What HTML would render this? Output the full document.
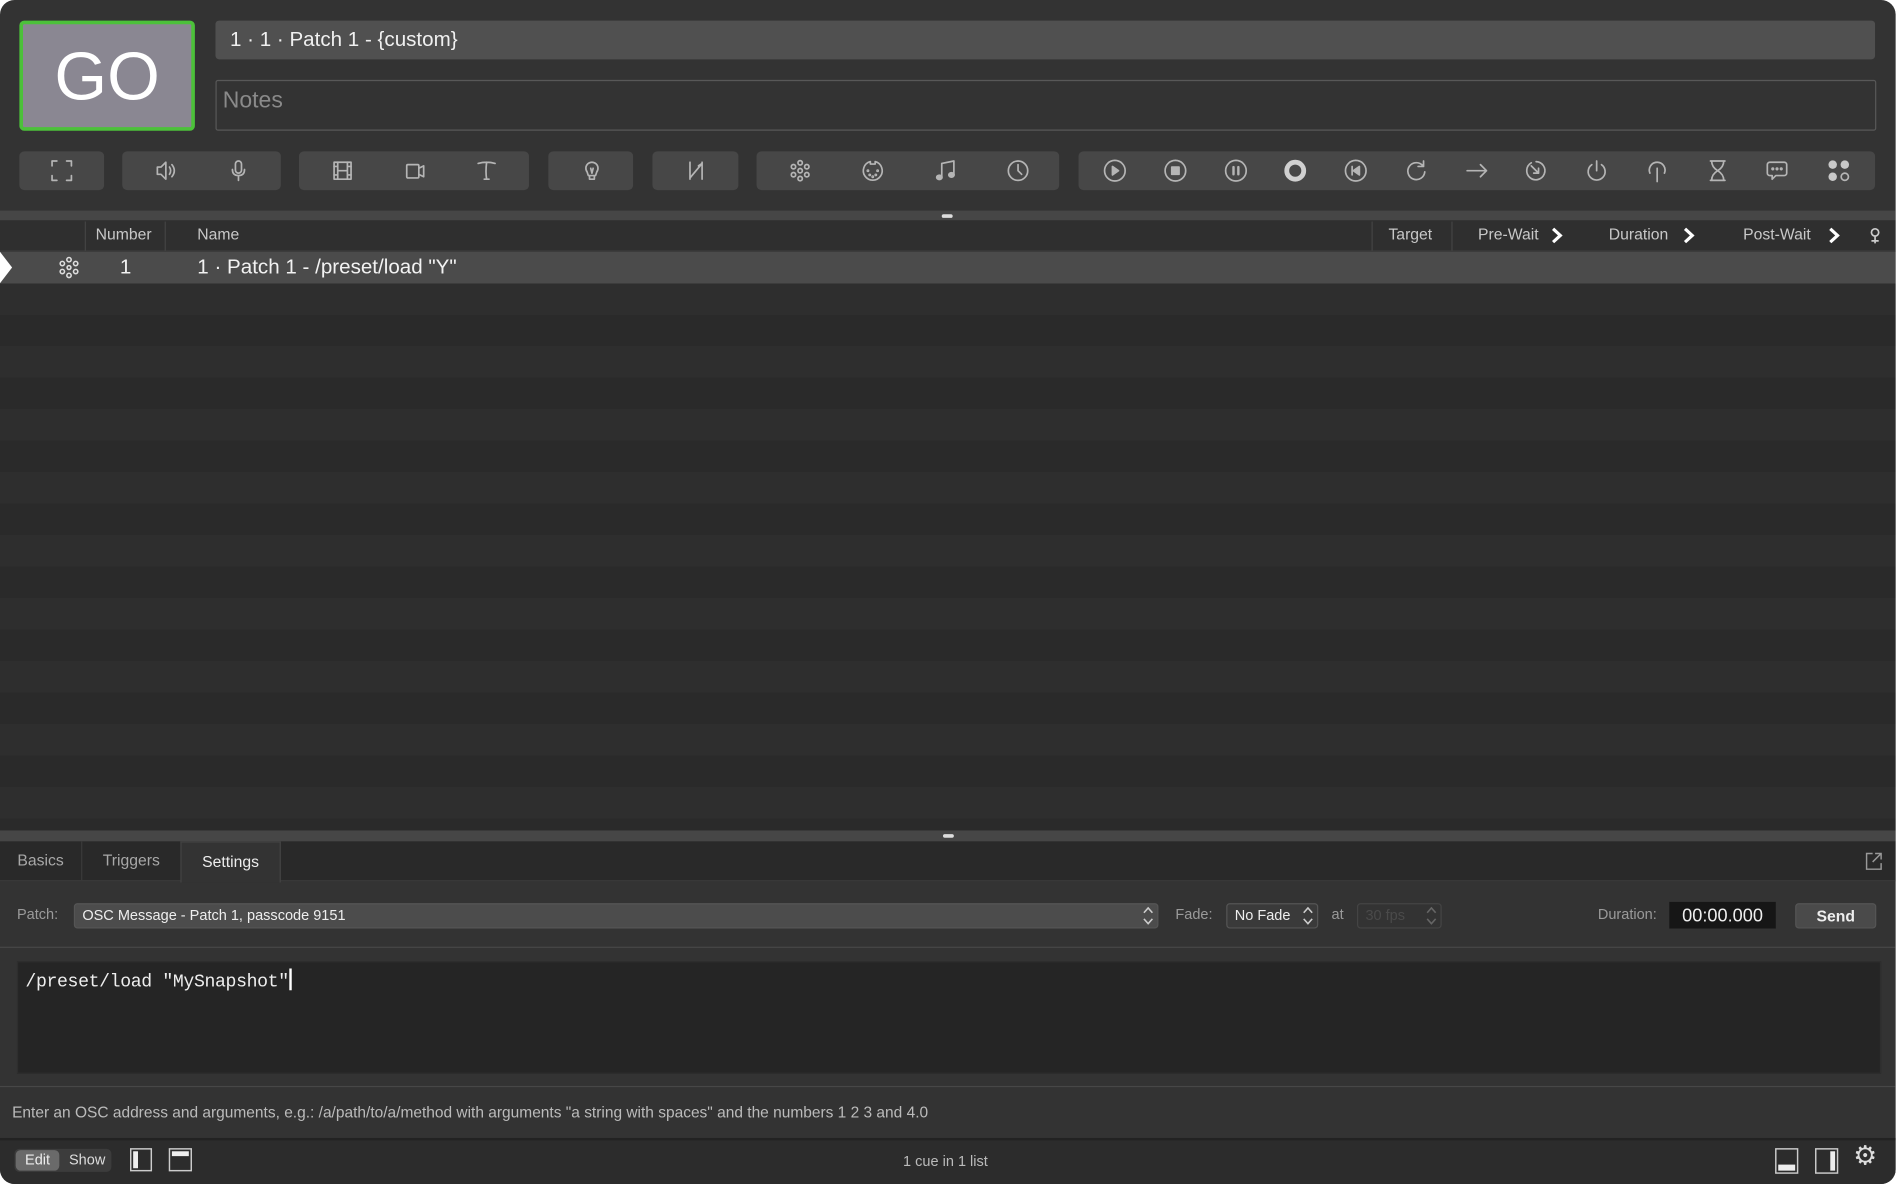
<!DOCTYPE html>
<html><head><meta charset="utf-8"><style>
html,body{margin:0;padding:0;background:#fff;width:1898px;height:1184px;overflow:hidden}
#w{position:absolute;left:0;top:0;width:1568px;height:978px;transform:scale(1.2105,1.2106);transform-origin:0 0;font-family:"Liberation Sans",sans-serif;}
#win{position:absolute;left:0;top:0;width:1566px;height:978px;background:#333;border-radius:12px;overflow:hidden}
.a{position:absolute}
.grp{position:absolute;top:125px;height:32px;background:#474747;border-radius:4px}
svg.i{position:absolute;top:131px;width:20px;height:20px;overflow:visible}
svg.i *{fill:none;stroke:#b5b5b5;stroke-width:1.4;stroke-linecap:round;stroke-linejoin:round}
.hd{position:absolute;top:186px;font-size:13px;color:#c8c8c8}
.sep{position:absolute;top:183px;width:1px;height:24px;background:#444}
.lbl{position:absolute;font-size:12px;color:#9a9a9a}
.ud{position:absolute;right:3px;top:2px}
</style></head><body><div id="w"><div id="win">
<div class="a" style="left:16px;top:17px;width:139px;height:85px;background:#8a8792;border:3px solid #4cc13a;border-radius:4px;color:#fff;font-size:56px;text-align:center;line-height:86px">GO</div>
<div class="a" style="left:178px;top:17px;width:1371px;height:32px;background:#505050;border-radius:3px;color:#f0f0f0;font-size:17px;line-height:32px;text-indent:12px">1 · 1 · Patch 1 - {custom}</div>
<div class="a" style="left:178px;top:66px;width:1370px;height:40px;background:#333;border:1px solid #585858;border-radius:2px;color:#8a8a8a;font-size:19px;line-height:34px;text-indent:5px">Notes</div>
<div class="grp" style="left:16px;width:70px"></div>
<div class="grp" style="left:101px;width:131px"></div>
<div class="grp" style="left:247px;width:190px"></div>
<div class="grp" style="left:453px;width:70px"></div>
<div class="grp" style="left:539px;width:71px"></div>
<div class="grp" style="left:625px;width:250px"></div>
<div class="grp" style="left:891px;width:658px"></div>
<svg class="i" style="left:41px" viewBox="0 0 20 20"><path d="M2 6V2h4M14 2h4v4M18 14v4h-4M6 18H2v-4"/></svg>
<svg class="i" style="left:127px" viewBox="0 0 20 20"><path d="M3 7h3l4-4v14l-4-4H3z M13 7q2 3 0 6 M15 5q4 5 0 10"/></svg>
<svg class="i" style="left:187px" viewBox="0 0 20 20"><rect x="7.5" y="2" width="5" height="10" rx="2.5"/><path d="M5 9q0 5 5 5t5-5M10 14v4"/></svg>
<svg class="i" style="left:273px" viewBox="0 0 20 20"><rect x="3" y="3" width="14" height="14"/><path d="M6 3v14M14 3v14M6 10h8M3 6.5h3M3 13.5h3M14 6.5h3M14 13.5h3"/></svg>
<svg class="i" style="left:333px" viewBox="0 0 20 20"><rect x="3" y="5" width="10" height="11" rx="1"/><path d="M13 8l4-2v9l-4-2"/></svg>
<svg class="i" style="left:392px" viewBox="0 0 20 20"><path d="M3 4q7-2 14 0M10 3q-1 8 0 14M8 17h4"/></svg>
<svg class="i" style="left:479px" viewBox="0 0 20 20"><path d="M6 11a5 5 0 1 1 8 0l-1 3H7z M8 14v3h4v-3 M9 8l1 4 1-4"/></svg>
<svg class="i" style="left:565px" viewBox="0 0 20 20"><path d="M5 3v14M15 3v14M5 16L15 4M12 6l3-2 0 3"/></svg>
<svg class="i" style="left:651px" viewBox="0 0 20 20"><circle cx="10" cy="10" r="1.8"/><circle cx="10" cy="3.5" r="1.8"/><circle cx="10" cy="16.5" r="1.8"/><circle cx="4.5" cy="6.7" r="1.8"/><circle cx="15.5" cy="6.7" r="1.8"/><circle cx="4.5" cy="13.3" r="1.8"/><circle cx="15.5" cy="13.3" r="1.8"/></svg>
<svg class="i" style="left:711px" viewBox="0 0 20 20"><path d="M8 2.5a7.8 7.8 0 1 0 4 0v2h-4z"/><circle cx="6" cy="10" r=".5"/><circle cx="14" cy="10" r=".5"/><circle cx="7.5" cy="13.5" r=".5"/><circle cx="12.5" cy="13.5" r=".5"/><circle cx="10" cy="15" r=".5"/></svg>
<svg class="i" style="left:771px" viewBox="0 0 20 20"><path d="M7 15V4l10-2v11"/><ellipse cx="5" cy="15.5" rx="2.2" ry="1.8" style="fill:#b5b5b5"/><ellipse cx="15" cy="13.5" rx="2.2" ry="1.8" style="fill:#b5b5b5"/></svg>
<svg class="i" style="left:831px" viewBox="0 0 20 20"><circle cx="10" cy="10" r="8"/><path d="M10 5v5l3 3"/></svg>
<svg class="i" style="left:911px" viewBox="0 0 20 20"><circle cx="10" cy="10" r="8.5"/><path d="M8 6.5l5 3.5-5 3.5z" style="fill:#b5b5b5"/></svg>
<svg class="i" style="left:961px" viewBox="0 0 20 20"><circle cx="10" cy="10" r="8.5"/><rect x="7" y="7" width="6" height="6" style="fill:#b5b5b5"/></svg>
<svg class="i" style="left:1011px" viewBox="0 0 20 20"><circle cx="10" cy="10" r="8.5"/><path d="M8 7v6M12 7v6" style="stroke-width:2"/></svg>
<svg class="i" style="left:1060px" viewBox="0 0 20 20"><circle cx="10" cy="10" r="7" style="stroke:#d0d0d0;stroke-width:4"/></svg>
<svg class="i" style="left:1110px" viewBox="0 0 20 20"><circle cx="10" cy="10" r="8.5"/><path d="M7 6.5v7M13 6.5l-5 3.5 5 3.5z" style="fill:#b5b5b5"/></svg>
<svg class="i" style="left:1160px" viewBox="0 0 20 20"><path d="M15.5 6A7 7 0 1 0 17 11M16 2v4.5h-4.5"/></svg>
<svg class="i" style="left:1210px" viewBox="0 0 20 20"><path d="M2 10h16M13 5l5 5-5 5"/></svg>
<svg class="i" style="left:1259px" viewBox="0 0 20 20"><path d="M6 3.5A7.5 7.5 0 1 0 10 2.5M6 6l6 6M12 8v4H8"/></svg>
<svg class="i" style="left:1309px" viewBox="0 0 20 20"><path d="M6 5a7 7 0 1 0 8 0M10 2v8"/></svg>
<svg class="i" style="left:1359px" viewBox="0 0 20 20"><path d="M4 12a6.5 6.5 0 1 1 12 0M10 8v11"/></svg>
<svg class="i" style="left:1409px" viewBox="0 0 20 20"><path d="M4 2h12M4 18h12M5 2q0 5 5 8 5-3 5-8M5 18q0-5 5-8 5 3 5 8"/></svg>
<svg class="i" style="left:1458px" viewBox="0 0 20 20"><path d="M4 3h12a2 2 0 0 1 2 2v7a2 2 0 0 1-2 2H9l-3 3v-3H4a2 2 0 0 1-2-2V5a2 2 0 0 1 2-2z"/><circle cx="6.5" cy="8.5" r=".6"/><circle cx="10" cy="8.5" r=".6"/><circle cx="13.5" cy="8.5" r=".6"/></svg>
<svg class="i" style="left:1509px" viewBox="0 0 20 20"><circle cx="5" cy="5" r="3.5" style="fill:#c8c8c8;stroke:none"/><circle cx="15" cy="5" r="3.5" style="fill:#c8c8c8;stroke:none"/><circle cx="5" cy="15" r="3.5" style="fill:#c8c8c8;stroke:none"/><circle cx="15" cy="15" r="3"/></svg>
<div class="a" style="left:0;top:174px;width:1566px;height:8px;background:#464646"></div>
<div class="a" style="left:778px;top:177px;width:9px;height:3px;background:#ddd;border-radius:2px"></div>
<div class="a" style="left:0;top:182px;width:1566px;height:25px;background:#2f2f2f;border-bottom:1px solid #444"></div>
<div class="sep" style="left:70px"></div><div class="sep" style="left:136px"></div><div class="sep" style="left:1133px"></div><div class="sep" style="left:1199px"></div>
<div class="hd" style="left:79px">Number</div>
<div class="hd" style="left:163px">Name</div>
<div class="hd" style="left:1147px">Target</div>
<div class="hd" style="left:1221px">Pre-Wait</div>
<div class="hd" style="left:1329px">Duration</div>
<div class="hd" style="left:1440px">Post-Wait</div>
<svg class="a" style="left:1281px;top:188px" width="10" height="13"><path d="M2 1l6 5.5L2 12" fill="none" stroke="#fff" stroke-width="2.6"/></svg>
<svg class="a" style="left:1390px;top:188px" width="10" height="13"><path d="M2 1l6 5.5L2 12" fill="none" stroke="#fff" stroke-width="2.6"/></svg>
<svg class="a" style="left:1510px;top:188px" width="10" height="13"><path d="M2 1l6 5.5L2 12" fill="none" stroke="#fff" stroke-width="2.6"/></svg>
<svg class="a" style="left:1543px;top:187px" width="12" height="16" viewBox="0 0 12 16"><circle cx="6" cy="5" r="3" fill="none" stroke="#ccc" stroke-width="1.4"/><path d="M6 8v6M3 12h6" stroke="#ccc" stroke-width="1.4"/></svg>
<div class="a" style="left:0;top:208px;width:1566px;height:478px;background:repeating-linear-gradient(#4b4b4b 0 26px,#2e2e2e 26px 52px,#2a2a2a 52px 78px,#2e2e2e 78px 104px,#2a2a2a 104px 130px,#2e2e2e 130px 156px,#2a2a2a 156px 182px,#2e2e2e 182px 208px,#2a2a2a 208px 234px,#2e2e2e 234px 260px,#2a2a2a 260px 286px,#2e2e2e 286px 312px,#2a2a2a 312px 338px,#2e2e2e 338px 364px,#2a2a2a 364px 390px,#2e2e2e 390px 416px,#2a2a2a 416px 442px,#2e2e2e 442px 468px,#2a2a2a 468px 494px)"></div>
<svg class="a" style="left:0;top:208px" width="12" height="26"><path d="M0 0L10 13 0 26z" fill="#fff"/></svg>
<svg class="a" style="left:47px;top:211px" width="20" height="20" viewBox="0 0 20 20"><g fill="none" stroke="#ddd" stroke-width="1.3"><circle cx="10" cy="10" r="1.6"/><circle cx="10" cy="3.5" r="1.8"/><circle cx="10" cy="16.5" r="1.8"/><circle cx="4.5" cy="6.7" r="1.8"/><circle cx="15.5" cy="6.7" r="1.8"/><circle cx="4.5" cy="13.3" r="1.8"/><circle cx="15.5" cy="13.3" r="1.8"/></g></svg>
<div class="a" style="left:99px;top:211px;font-size:17px;color:#f2f2f2">1</div>
<div class="a" style="left:163px;top:211px;font-size:17px;color:#f2f2f2">1 · Patch 1 - /preset/load "Y"</div>
<div class="a" style="left:0;top:686px;width:1566px;height:9px;background:#464646"></div>
<div class="a" style="left:779px;top:689px;width:9px;height:3px;background:#ddd;border-radius:2px"></div>
<div class="a" style="left:0;top:695px;width:1566px;height:32px;background:#292929;border-bottom:1px solid #3a3a3a"></div>
<div class="a" style="left:0;top:695px;width:67px;height:32px;border-right:1px solid #3a3a3a;color:#a8a8a8;font-size:13px;line-height:32px;text-align:center">Basics</div>
<div class="a" style="left:68px;top:695px;width:81px;height:32px;color:#a8a8a8;font-size:13px;line-height:32px;text-align:center">Triggers</div>
<div class="a" style="left:149px;top:695px;width:81px;height:33px;background:#333;border:1px solid #444;border-bottom:none;color:#eee;font-size:13px;line-height:32px;text-align:center">Settings</div>
<svg class="a" style="left:1541px;top:704px" width="14" height="15"><path d="M6 1H1v13h12V9M8 1h5v5M13 1L6 8" fill="none" stroke="#999" stroke-width="1.2"/></svg>
<div class="lbl" style="left:14px;top:748px">Patch:</div>
<div class="a" style="left:61px;top:746px;width:894px;height:19px;background:#4c4c4c;border:1px solid #555;border-radius:3px;font-size:12px;color:#eee;line-height:19px;text-indent:6px">OSC Message - Patch 1, passcode 9151<svg class="ud" width="9" height="15"><path d="M1 5l3.5-4L8 5M1 10l3.5 4L8 10" fill="none" stroke="#ccc" stroke-width="1.3"/></svg></div>
<div class="lbl" style="left:971px;top:748px">Fade:</div>
<div class="a" style="left:1013px;top:746px;width:74px;height:19px;background:#3a3a3a;border:1px solid #555;border-radius:3px;font-size:12px;color:#eee;line-height:19px;text-indent:6px">No Fade<svg class="ud" width="9" height="15"><path d="M1 5l3.5-4L8 5M1 10l3.5 4L8 10" fill="none" stroke="#ccc" stroke-width="1.3"/></svg></div>
<div class="lbl" style="left:1100px;top:748px">at</div>
<div class="a" style="left:1121px;top:746px;width:68px;height:19px;background:#333;border:1px solid #444;border-radius:3px;font-size:12px;color:#4a4a4a;line-height:19px;text-indent:6px">30 fps<svg class="ud" width="9" height="15"><path d="M1 5l3.5-4L8 5M1 10l3.5 4L8 10" fill="none" stroke="#666" stroke-width="1.3"/></svg></div>
<div class="lbl" style="left:1320px;top:748px">Duration:</div>
<div class="a" style="left:1379px;top:745px;width:88px;height:22px;background:#161616;font-size:15px;color:#eee;line-height:23px;text-align:center">00:00.000</div>
<div class="a" style="left:1483px;top:746px;width:65px;height:19px;background:#4a4a4a;border:1px solid #555;border-radius:3px;font-size:13px;color:#eee;line-height:19px;text-align:center;font-weight:bold">Send</div>
<div class="a" style="left:0;top:782px;width:1566px;height:1px;background:#474747"></div>
<div class="a" style="left:14px;top:794px;width:1538px;height:91px;background:#252525;border:1px solid #2e2e2e"></div>
<div class="a" style="left:21px;top:800px;font-family:'Liberation Mono',monospace;font-size:15px;letter-spacing:-0.3px;color:#eee">/preset/load "MySnapshot"<span style="display:inline-block;width:2px;height:18px;background:#fff;vertical-align:-3px"></span></div>
<div class="a" style="left:0;top:897px;width:1566px;height:1px;background:#474747"></div>
<div class="a" style="left:10px;top:911px;font-size:12.8px;color:#bbb;white-space:nowrap">Enter an OSC address and arguments, e.g.: /a/path/to/a/method with arguments "a string with spaces" and the numbers 1 2 3 and 4.0</div>
<div class="a" style="left:0;top:940px;width:1566px;height:38px;background:#2c2c2c;border-top:2px solid #222"></div>
<div class="a" style="left:12px;top:949px;width:80px;height:19px;background:#3c3c3c;border-radius:4px"></div>
<div class="a" style="left:13px;top:950px;width:36px;height:17px;background:#6a6a6a;border-radius:4px;font-size:12px;color:#eee;text-align:center;line-height:17px">Edit</div>
<div class="a" style="left:57px;top:950px;font-size:12px;color:#ddd;line-height:17px">Show</div>
<svg class="a" style="left:107px;top:948px" width="20" height="20"><rect x="1" y="1" width="17" height="18" fill="none" stroke="#ccc" stroke-width="1.2"/><rect x="3" y="3" width="4" height="14" fill="#eee"/></svg>
<svg class="a" style="left:139px;top:948px" width="20" height="20"><rect x="1" y="1" width="18" height="18" fill="none" stroke="#ccc" stroke-width="1.2"/><rect x="3" y="3" width="14" height="4" fill="#eee"/></svg>
<div class="a" style="left:746px;top:952px;font-size:12px;color:#bbb">1 cue in 1 list</div>
<svg class="a" style="left:1466px;top:948px" width="20" height="22"><rect x="1" y="1" width="18" height="20" fill="none" stroke="#ccc" stroke-width="1.2"/><rect x="3" y="14" width="14" height="5" fill="#eee"/></svg>
<svg class="a" style="left:1499px;top:948px" width="20" height="22"><rect x="1" y="1" width="18" height="20" fill="none" stroke="#ccc" stroke-width="1.2"/><rect x="13" y="3" width="4" height="16" fill="#eee"/></svg>
<div class="a" style="left:1531px;top:943px;font-size:22px;color:#ddd;font-family:'DejaVu Sans',sans-serif">⚙</div>
</div></div></body></html>
